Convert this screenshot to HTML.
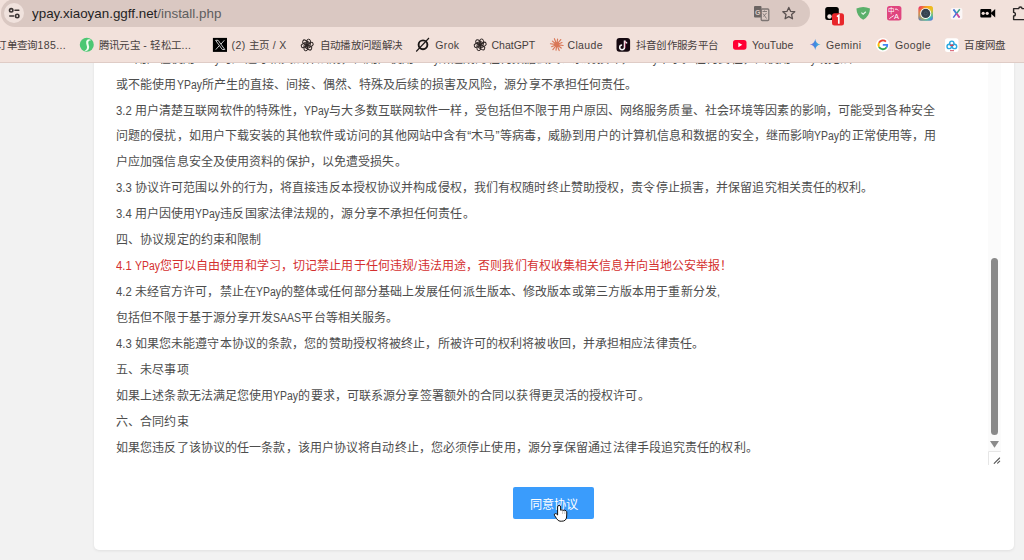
<!DOCTYPE html>
<html lang="zh-CN"><head><meta charset="utf-8">
<style>
*{margin:0;padding:0;box-sizing:border-box}
html,body{width:1024px;height:560px;overflow:hidden;background:#f2f2f2;font-family:"Liberation Sans",sans-serif}
#chrome{position:absolute;left:0;top:0;width:1024px;height:63px;background:#f2e1db;z-index:10}
#chrome .line{position:absolute;left:0;top:62px;width:1024px;height:1px;background:#dfccc6}
#addr{position:absolute;left:1px;top:-1px;width:809px;height:28px;border-radius:14px;background:#dac8c2}
#addr .tune{position:absolute;left:3px;top:4px;width:20px;height:20px;border-radius:10px;background:#f0e2dd}
.url{position:absolute;left:32px;top:6px;font-size:13.6px;transform:scaleX(.985);transform-origin:0 0;color:#1f1f1f;white-space:nowrap}
.url span{color:#5e5e5e}
.bm{position:absolute;top:38px;font-size:10.5px;letter-spacing:.35px;color:#463e3d;white-space:nowrap;line-height:14px}
.ic{position:absolute}
#card{position:absolute;left:94px;top:30px;width:920px;height:520px;background:#fff;border-radius:5px;box-shadow:0 1px 3px rgba(0,0,0,.08)}
#txt{position:absolute;left:116px;top:45px;font-size:12px;color:#4d4d4d;line-height:26px;white-space:nowrap}
#txt .r{color:#d42f2f}
#txt{letter-spacing:.11px}
.l{display:inline-block;font-weight:normal;letter-spacing:0;white-space:pre;vertical-align:baseline}
.l i{display:inline-block;font-style:normal;transform-origin:0 0}
#track{position:absolute;left:988px;top:62px;width:13px;height:389px;background:#fbfbfb}
#thumb{position:absolute;left:991px;top:258px;width:7px;height:177px;border-radius:4px;background:#8a8a8a}
#btn{position:absolute;left:513px;top:487px;width:81px;height:32px;background:#3a9cfc;border-radius:2px;color:#fff;font-size:12.2px;text-align:center;line-height:32px;padding-top:2px}
</style></head><body>
<div id="card"></div>
<div id="txt">
<div style="position:relative;top:1px"><b class="l" style="width:18.8px"><i style="transform:scaleX(.94)">3.1</i></b>用户在使用<b class="l" style="width:25.0px"><i style="transform:scaleX(0.870)">YPay</i></b>时应遵守相关法律法规，因用户使用<b class="l" style="width:25.0px"><i style="transform:scaleX(0.870)">YPay</i></b>所造成的任何数据丢失、系统损坏，<b class="l" style="width:25.0px"><i style="transform:scaleX(0.870)">YPay</i></b>不承担任何责任，因使用<b class="l" style="width:25.0px"><i style="transform:scaleX(0.870)">YPay</i></b>或无法</div>
<div style="position:relative;top:1px">或不能使用<b class="l" style="width:25.0px"><i style="transform:scaleX(0.870)">YPay</i></b>所产生的直接、间接、偶然、特殊及后续的损害及风险，源分享不承担任何责任。</div>
<div style="position:relative;top:1px"><b class="l" style="width:18.8px"><i style="transform:scaleX(.94)">3.2</i></b>用户清楚互联网软件的特殊性，<b class="l" style="width:25.0px"><i style="transform:scaleX(0.870)">YPay</i></b>与大多数互联网软件一样，受包括但不限于用户原因、网络服务质量、社会环境等因素的影响，可能受到各种安全</div>
<div>问题的侵扰，如用户下载安装的其他软件或访问的其他网站中含有“木马”等病毒，威胁到用户的计算机信息和数据的安全，继而影响<b class="l" style="width:25.0px"><i style="transform:scaleX(0.870)">YPay</i></b>的正常使用等，用</div>
<div>户应加强信息安全及使用资料的保护，以免遭受损失。</div>
<div><b class="l" style="width:18.8px"><i style="transform:scaleX(.94)">3.3</i></b>协议许可范围以外的行为，将直接违反本授权协议并构成侵权，我们有权随时终止赞助授权，责令停止损害，并保留追究相关责任的权利。</div>
<div><b class="l" style="width:18.8px"><i style="transform:scaleX(.94)">3.4</i></b>用户因使用<b class="l" style="width:25.0px"><i style="transform:scaleX(0.870)">YPay</i></b>违反国家法律法规的，源分享不承担任何责任。</div>
<div>四、协议规定的约束和限制</div>
<div class="r"><b class="l" style="width:18.8px"><i style="transform:scaleX(.94)">4.1</i></b><b class="l" style="width:25.0px"><i style="transform:scaleX(0.870)">YPay</i></b>您可以自由使用和学习，切记禁止用于任何违规<b class="l" style="width:3.6px"><i style="transform:scaleX(0.900)">/</i></b>违法用途，否则我们有权收集相关信息并向当地公安举报！</div>
<div><b class="l" style="width:18.8px"><i style="transform:scaleX(.94)">4.2</i></b>未经官方许可，禁止在<b class="l" style="width:25.0px"><i style="transform:scaleX(0.870)">YPay</i></b>的整体或任何部分基础上发展任何派生版本、修改版本或第三方版本用于重新分发<b class="l" style="width:3.0px"><i style="transform:scaleX(0.900)">,</i></b></div>
<div>包括但不限于基于源分享开发<b class="l" style="width:28.0px"><i style="transform:scaleX(0.875)">SAAS</i></b>平台等相关服务。</div>
<div><b class="l" style="width:18.8px"><i style="transform:scaleX(.94)">4.3</i></b>如果您未能遵守本协议的条款，您的赞助授权将被终止，所被许可的权利将被收回，并承担相应法律责任。</div>
<div>五、未尽事项</div>
<div>如果上述条款无法满足您使用<b class="l" style="width:25.0px"><i style="transform:scaleX(0.870)">YPay</i></b>的要求，可联系源分享签署额外的合同以获得更灵活的授权许可。</div>
<div>六、合同约束</div>
<div>如果您违反了该协议的任一条款，该用户协议将自动终止，您必须停止使用，源分享保留通过法律手段追究责任的权利。</div>
</div>
<div id="track"></div>
<div id="thumb"></div>
<div id="btn">同意协议</div>
<svg style="position:absolute;left:0;top:0;z-index:5" width="1024" height="560" viewBox="0 0 1024 560">
 <path d="M990 441h9l-4.5 6.7z" fill="#8a8a8a"/>
 <path d="M988.5 465V451.5H1000.7" fill="none" stroke="#e6e6e6" stroke-width="1"/>
 <path d="M994.2 463.3L999.6 458M997.6 463.2L999.7 461.1" stroke="#555" stroke-width="1.1" stroke-linecap="round"/>
 <path d="M557.6 507Q557.6 505.4 559.1 505.4Q560.6 505.4 560.6 507L560.6 510.2Q562 509.3 563.3 510.5Q564.8 509.7 566 510.8Q567 511.3 566.8 513L566.6 517Q566.2 521.2 561.8 521.2L560 521.2Q558 521 556.6 518.6L554.4 515.2Q553.9 513.8 555.3 513.6Q556.5 513.6 557.6 515Z" fill="#fff" stroke="#111" stroke-width="1" stroke-linejoin="round"/>
 <path d="M562.6 510.8v3.2M564.8 511v3" stroke="#aaa" stroke-width=".7"/>
</svg>

<div id="chrome">
<div id="addr"><div class="tune"></div></div>
<svg class="ic" style="left:0;top:0" width="1024" height="62" viewBox="0 0 1024 62">
 <!-- tune icon -->
 <g stroke="#3a3433" stroke-width="1.6" fill="none" stroke-linecap="round">
  <circle cx="11.2" cy="10.3" r="1.7"/><line x1="15" y1="10.3" x2="18.8" y2="10.3"/>
  <circle cx="17.2" cy="16" r="1.7"/><line x1="9.8" y1="16" x2="13.6" y2="16"/>
 </g>
 <!-- translate icon -->
 <rect x="754" y="6" width="7.5" height="11.5" rx="1" fill="#6b6462"/>
 <text x="755" y="15.2" font-size="7" font-family="Liberation Sans" font-weight="bold" fill="#dac8c2">G</text>
 <rect x="761.2" y="9" width="7.6" height="11.5" rx="1" fill="none" stroke="#7d7573" stroke-width="1.3"/>
 <path d="M762.5 11.5h4.5M764.5 10.5v1M763 13.5l3.5 5M766.5 13l-3 3.5" stroke="#7d7573" stroke-width="0.9" fill="none"/>
 <!-- star -->
 <path d="M788.8 7.4l1.75 3.9 4.2.45-3.15 2.85.9 4.15-3.7-2.15-3.7 2.15.9-4.15-3.15-2.85 4.2-.45z" fill="none" stroke="#5a5150" stroke-width="1.3" stroke-linejoin="round"/>
 <!-- ext1 black square + badge -->
 <rect x="825.2" y="6.9" width="13.6" height="13.1" rx="2.5" fill="#000"/>
 <circle cx="829.5" cy="16.5" r="2.2" fill="#f0e4e0"/>
 <rect x="832" y="13.2" width="12" height="12.3" rx="2.5" fill="#e8262b"/>
 <path d="M836.9 16.6l1.9-1.2v8.3" stroke="#fff" stroke-width="1.7" fill="none"/>
 <!-- green shield -->
 <path d="M856.4 8.6q6.8-3.2 13.6 0q-.3 8-6.8 11.2q-6.5-3.2-6.8-11.2z" fill="#5bb06b"/>
 <path d="M861.4 12.6l1.8 1.6 2.6-2.4" stroke="#e9f5ea" stroke-width="1.2" fill="none"/>
 <!-- pink translate -->
 <rect x="887" y="6.1" width="14.4" height="14.4" rx="2.5" fill="#e0457f"/>
 <text x="888.3" y="13" font-size="6.5" fill="#fff" font-family="sans-serif">中</text>
 <text x="894" y="19.3" font-size="7.5" fill="#fff" font-family="Liberation Sans">A</text>
 <path d="M895 9.2q2.3-.8 3.2 1.3M893.8 15.5q-2.5 1.6-4.5 3.2" stroke="#fff" stroke-width=".9" fill="none"/>
 <!-- colorful circle -->
 <defs>
  <linearGradient id="rb" x1="0" y1="0" x2="1" y2="1">
   <stop offset="0" stop-color="#e8147a"/><stop offset=".35" stop-color="#f5a31a"/><stop offset=".55" stop-color="#c8e03a"/><stop offset=".75" stop-color="#26cfc0"/><stop offset="1" stop-color="#5b5cf0"/>
  </linearGradient>
  <linearGradient id="rb2" x1="1" y1="0" x2="0" y2="1">
   <stop offset="0" stop-color="#f7b21c" stop-opacity="1"/><stop offset=".5" stop-color="#f7b21c" stop-opacity="0"/><stop offset="1" stop-color="#3a63f2" stop-opacity="1"/>
  </linearGradient>
  <linearGradient id="gm" x1="0" y1="0" x2="1" y2="0">
   <stop offset="0" stop-color="#8a6cd8"/><stop offset=".5" stop-color="#3c8be0"/><stop offset="1" stop-color="#4fc3d8"/>
  </linearGradient>
 </defs>
 <rect x="918.4" y="6.1" width="14.6" height="14.6" rx="3" fill="url(#rb)"/>
 <rect x="918.4" y="6.1" width="14.6" height="14.6" rx="3" fill="url(#rb2)"/>
 <circle cx="925.7" cy="13.4" r="5.5" fill="#fff"/>
 <circle cx="925.7" cy="13.4" r="4.6" fill="#36414d"/>
 <circle cx="925.7" cy="13.4" r="1.6" fill="none" stroke="#4a6070" stroke-width=".7"/>
 <!-- X logo ext -->
 <rect x="950.6" y="7.9" width="11.8" height="11.7" rx="2" fill="#fbf6f6"/>
 <path d="M953.5 9.5l6 8" stroke="#8a5cc8" stroke-width="1.5"/>
 <path d="M959.8 9.3l-3 4" stroke="#3ea98a" stroke-width="1.5"/>
 <path d="M956.3 13.6l-3 4" stroke="#4a6ad8" stroke-width="1.5"/>
 <path d="M953.5 9.5l3 4" stroke="#3a8ad8" stroke-width="1.5"/>
 <path d="M956.5 13.5l3 4" stroke="#d64a98" stroke-width="1.5"/>
 <!-- video cam -->
 <rect x="980.3" y="9" width="11" height="8.6" rx="1" fill="#000"/>
 <path d="M990.5 13.3l4.7-4.3v8.6z" fill="#000"/>
 <circle cx="983.2" cy="13.3" r="1.6" fill="#f2e1db"/><circle cx="987.2" cy="13.3" r="1.6" fill="#f2e1db"/>
 <!-- puzzle -->
 <path d="M1013.6 8.6h5.2a1.6 1.6 0 0 1 3.2 0h4v11h-12.4v-3.6a1.7 1.7 0 0 0 0-3.6z" fill="none" stroke="#2b2626" stroke-width="1.4" stroke-linejoin="round"/>
 <!-- bookmark icons -->
 <circle cx="86.8" cy="44.7" r="7" fill="#4cc773"/>
 <path d="M91.2 40.2Q89.5 38.6 87.6 39.6Q85.6 40.8 86.2 43.4Q86.7 45.4 87 46.8Q87.4 49.6 84.2 51.2Q88 51.4 88.9 48.6Q89.5 46.6 88.6 44.4Q87.8 42.4 88.6 41.2Q89.6 40.1 91.2 40.2z" fill="#effcef"/>
 <rect x="212.9" y="37.9" width="14.1" height="14" fill="#000"/>
 <path d="M215.6 40.3h2.5l6.7 9.2h-2.5z" fill="none" stroke="#c8c8c8" stroke-width="1"/>
 <path d="M224.3 40.3l-3.4 3.9M219.3 45.6l-3.5 4" stroke="#c8c8c8" stroke-width="1"/>
 <g transform="translate(307.2 45.0)" stroke="#2b2322" stroke-width="1" fill="none"><rect x="-1.6" y="-5.8" width="3.6" height="7.2" rx="1.8" transform="rotate(0) translate(1.2 0)"/><rect x="-1.6" y="-5.8" width="3.6" height="7.2" rx="1.8" transform="rotate(60) translate(1.2 0)"/><rect x="-1.6" y="-5.8" width="3.6" height="7.2" rx="1.8" transform="rotate(120) translate(1.2 0)"/><rect x="-1.6" y="-5.8" width="3.6" height="7.2" rx="1.8" transform="rotate(180) translate(1.2 0)"/><rect x="-1.6" y="-5.8" width="3.6" height="7.2" rx="1.8" transform="rotate(240) translate(1.2 0)"/><rect x="-1.6" y="-5.8" width="3.6" height="7.2" rx="1.8" transform="rotate(300) translate(1.2 0)"/></g>
 <g transform="translate(480.2 44.8)" stroke="#2b2322" stroke-width="1" fill="none"><rect x="-1.6" y="-5.8" width="3.6" height="7.2" rx="1.8" transform="rotate(0) translate(1.2 0)"/><rect x="-1.6" y="-5.8" width="3.6" height="7.2" rx="1.8" transform="rotate(60) translate(1.2 0)"/><rect x="-1.6" y="-5.8" width="3.6" height="7.2" rx="1.8" transform="rotate(120) translate(1.2 0)"/><rect x="-1.6" y="-5.8" width="3.6" height="7.2" rx="1.8" transform="rotate(180) translate(1.2 0)"/><rect x="-1.6" y="-5.8" width="3.6" height="7.2" rx="1.8" transform="rotate(240) translate(1.2 0)"/><rect x="-1.6" y="-5.8" width="3.6" height="7.2" rx="1.8" transform="rotate(300) translate(1.2 0)"/></g>
 <g stroke="#1b1716" fill="none">
  <circle cx="423" cy="44.8" r="4.4" stroke-width="1.9"/>
  <path d="M416.2 51.5l12.8-13.5" stroke-width="1.1"/>
 </g>
 <g transform="translate(556.8 44.6)" stroke="#d97757" stroke-width="1.15" stroke-linecap="round"><path d="M1.78 0.25L6.34 0.89M1.42 1.11L4.41 3.45M0.67 1.67L2.40 5.93M-0.25 1.78L-0.78 5.55M-1.11 1.42L-3.94 5.04M-1.67 0.67L-5.19 2.10M-1.78 -0.25L-6.34 -0.89M-1.42 -1.11L-4.41 -3.45M-0.67 -1.67L-2.40 -5.93M0.25 -1.78L0.78 -5.55M1.11 -1.42L3.94 -5.04M1.67 -0.67L5.19 -2.10"/><circle r="2.3" fill="#d97757" stroke="none"/></g>
 <rect x="616.5" y="37.9" width="13.6" height="13.8" rx="3" fill="#150810"/>
 <path d="M624.5 40.5v6.8a2.4 2.4 0 1 1-2.4-2.4M624.5 40.5q.6 2.2 2.7 2.4" stroke="#f2f2f2" stroke-width="1.5" fill="none"/>
 <path d="M625.3 41.3v6.8" stroke="#e0245e" stroke-width=".5" fill="none"/>
 <rect x="733" y="39.9" width="13.5" height="9.8" rx="2.6" fill="#ff0033"/>
 <path d="M738.3 42.4v4.8l4-2.4z" fill="#fff"/>
 <path d="M815.2 39.1q.6 4.9 5.5 5.5q-4.9.6-5.5 5.5q-.6-4.9-5.5-5.5q4.9-.6 5.5-5.5z" fill="url(#gm)"/>
 <circle cx="882.8" cy="44.8" r="6.9" fill="#fff"/>
 <g fill="none" stroke-width="1.9">
  <path d="M885.9 41.6a4.4 4.4 0 0 0-6.9 1.2" stroke="#ea4335"/>
  <path d="M879 42.8a4.4 4.4 0 0 0 0 4" stroke="#fbbc05"/>
  <path d="M879 46.8a4.4 4.4 0 0 0 7.6.5" stroke="#34a853"/>
  <path d="M886.6 47.3q.7-1 .6-2.4h-4.4" stroke="#4285f4"/>
 </g>
 <rect x="945" y="38.3" width="13.5" height="13.7" rx="2.5" fill="#fff"/>
 <g fill="none" stroke-width="1.4">
  <circle cx="951.8" cy="43.3" r="2.2" stroke="#2aa8e0"/>
  <circle cx="949.2" cy="46.4" r="2.2" stroke="#2aa8e0"/>
  <circle cx="954.5" cy="46.4" r="2.2" stroke="#2aa8e0"/>
  <path d="M950.3 44.8q1.5 1.4 3 0" stroke="#e04050"/>
 </g>
 <path d="M950 50.7h4" stroke="#d03a50" stroke-width=".9"/>
</svg>
<div class="url">ypay.xiaoyan.ggff.net<span>/install.php</span></div>
<div class="bm" style="left:-3.8px">订单查询185...</div>
<div class="bm" style="left:98.6px">腾讯元宝 - 轻松工...</div>
<div class="bm" style="left:231.6px">(2) 主页 / X</div>
<div class="bm" style="left:319.6px">自动播放问题解决</div>
<div class="bm" style="left:435.3px">Grok</div>
<div class="bm" style="left:491.5px;letter-spacing:0">ChatGPT</div>
<div class="bm" style="left:567.5px">Claude</div>
<div class="bm" style="left:635.5px">抖音创作服务平台</div>
<div class="bm" style="left:752px;letter-spacing:0">YouTube</div>
<div class="bm" style="left:826px">Gemini</div>
<div class="bm" style="left:895px">Google</div>
<div class="bm" style="left:964.3px">百度网盘</div>
<div class="line"></div>
</div>
</body></html>
